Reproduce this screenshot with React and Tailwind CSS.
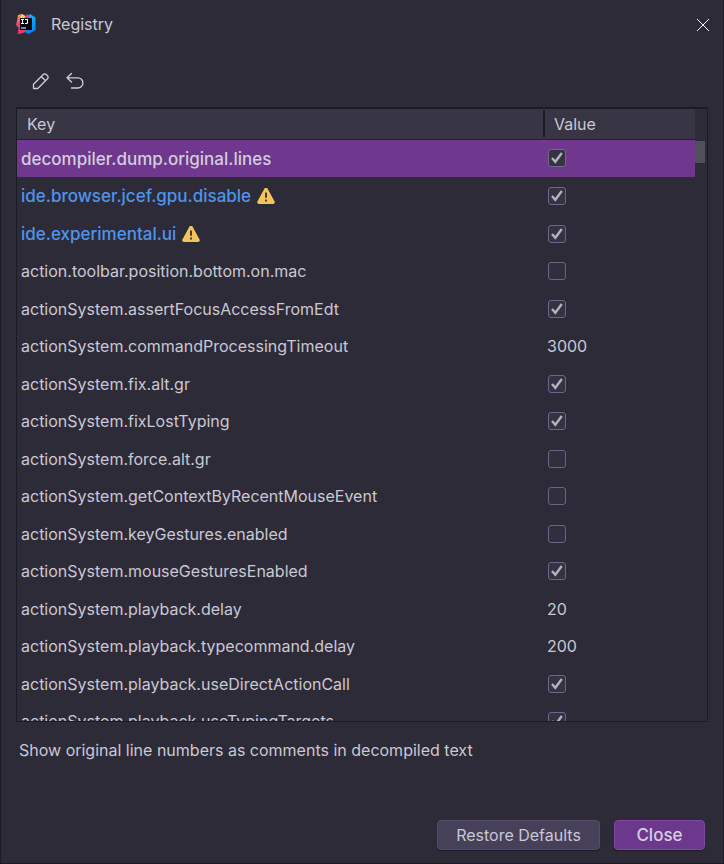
import { useState } from "react";

const initialEntries = [
  { key: "decompiler.dump.original.lines", value: true, selected: true },
  { key: "ide.browser.jcef.gpu.disable", value: true, modified: true },
  { key: "ide.experimental.ui", value: true, modified: true },
  { key: "action.toolbar.position.bottom.on.mac", value: false },
  { key: "actionSystem.assertFocusAccessFromEdt", value: true },
  { key: "actionSystem.commandProcessingTimeout", value: "3000" },
  { key: "actionSystem.fix.alt.gr", value: true },
  { key: "actionSystem.fixLostTyping", value: true },
  { key: "actionSystem.force.alt.gr", value: false },
  { key: "actionSystem.getContextByRecentMouseEvent", value: false },
  { key: "actionSystem.keyGestures.enabled", value: false },
  { key: "actionSystem.mouseGesturesEnabled", value: true },
  { key: "actionSystem.playback.delay", value: "20" },
  { key: "actionSystem.playback.typecommand.delay", value: "200" },
  { key: "actionSystem.playback.useDirectActionCall", value: true },
  { key: "actionSystem.playback.useTypingTargets", value: true },
];

function IdeaLogo() {
  return (
    <svg viewBox="0 0 20 20" className="size-5" aria-hidden="true">
      <defs>
        <linearGradient id="warm" x1="0" y1="0" x2="0.3" y2="1">
          <stop offset="0" stopColor="#fcb24a" />
          <stop offset="0.35" stopColor="#fb6a4c" />
          <stop offset="0.6" stopColor="#e8338c" />
          <stop offset="1" stopColor="#f0246e" />
        </linearGradient>
        <linearGradient id="cool" x1="0" y1="0" x2="0" y2="1">
          <stop offset="0" stopColor="#10b5f5" />
          <stop offset="1" stopColor="#087cfa" />
        </linearGradient>
      </defs>
      <path d="M10 3 14 0l5.500 3.500V16L13 20l-5-2Z" fill="url(#cool)" />
      <path d="M2 1 6 0l5 3v12l-4 3-5.500 2 1-6L0 11l1-4Z" fill="url(#warm)" />
      <path d="M6 0l5 3-1 3-6-2Z" fill="#f6d365" />
      <path d="M8.500 4 11 0l2 2-1 3Z" fill="#e0359f" />
      <path d="M3 16l4-1 3 2-3 2-4.500 1Z" fill="#f4386c" />
      <rect x="4" y="4" width="12" height="12" fill="#07060b" />
      <path
        d="M5 5.500h3M6.500 5.500v4M5 9.500h3M9 5.500h2.500v3q0 1-1 1H9M5 14h5"
        stroke="#fff"
        strokeWidth="1.100"
        fill="none"
      />
    </svg>
  );
}

function PencilIcon() {
  return (
    <svg viewBox="0 0 18 18" className="size-[18px]" fill="none" stroke="currentColor" strokeWidth="1.300" strokeLinejoin="round" aria-hidden="true">
      <path d="M1.500 16.500V12.300L11.300 2.500a2.100 2.100 0 0 1 3 0l1.200 1.200a2.100 2.100 0 0 1 0 3L5.700 16.500ZM9.300 4.500l4.200 4.200" />
    </svg>
  );
}

function UndoIcon() {
  return (
    <svg viewBox="0 0 18 18" className="size-[18px]" fill="none" stroke="currentColor" strokeWidth="1.300" strokeLinecap="round" strokeLinejoin="round" aria-hidden="true">
      <path d="M5.500 1.500 1 5.800l4.500 4.200M1 5.800h10.800a5 5 0 0 1 0 10.200H5.500" />
    </svg>
  );
}

function WarningIcon() {
  return (
    <svg viewBox="0 0 18 18" className="size-[18px] shrink-0" role="img" aria-label="Restart required">
      <path d="M7.500 .4a1.700 1.700 0 0 1 3 0l7.100 13.200A1.700 1.700 0 0 1 16.100 16H1.900A1.700 1.700 0 0 1 .4 13.600Z" fill="#f2c55c" />
      <path d="M8 4.500h2v5.200H8ZM8 11.500h2v2H8Z" fill="#4d3d25" />
    </svg>
  );
}

function Tick({ label, checked, onChange, selected }) {
  return (
    <label className="grid size-[18px] place-items-center">
      <input
        type="checkbox"
        aria-label={label}
        checked={checked}
        onChange={onChange}
        className={`col-start-1 row-start-1 size-[18px] appearance-none rounded-[3px] border ${
          selected ? "border-[#716a85] bg-[#353342]" : checked ? "border-[#6f6390] bg-[#353242]" : "border-[#6b6484] bg-[#312f3d]"
        }`}
      />
      {checked && (
        <svg viewBox="0 0 18 18" className="pointer-events-none col-start-1 row-start-1 size-[18px]" fill="none" stroke="#b4b1c0" strokeWidth="2.400" aria-hidden="true">
          <path d="M4 9 7.300 12.800 13.800 4" />
        </svg>
      )}
    </label>
  );
}

export default function App() {
  const [entries, setEntries] = useState(initialEntries);
  const toggle = (key) =>
    setEntries((list) => list.map((e) => (e.key === key ? { ...e, value: !e.value } : e)));

  return (
    <main className="flex h-screen flex-col border-x border-b border-[#1c1a25] bg-[#2d2b38] font-['Inter',sans-serif] text-base text-[#c9c8d3]">
      <header className="flex h-12 shrink-0 items-center pr-3 pl-[15px]">
        <IdeaLogo />
        <h1 className="ml-[15px] flex-1">Registry</h1>
        <button type="button" aria-label="Close window" className="grid size-4 place-items-center text-[#f4f4f6]">
          <svg viewBox="0 0 16 16" className="size-4" stroke="currentColor" strokeWidth="1" aria-hidden="true">
            <path d="M2 3l12 12M14 3 2 15" />
          </svg>
        </button>
      </header>

      <div className="flex h-[59px] shrink-0 items-center gap-4 pt-[6px] pl-[31px] text-[#cfced8]">
        <button type="button" aria-label="Edit value">
          <PencilIcon />
        </button>
        <button type="button" aria-label="Revert value">
          <UndoIcon />
        </button>
      </div>

      <section className="mx-[15px] flex min-h-0 flex-1 overflow-hidden border border-t-2 border-[#1c1a25]">
        <div className="min-w-0 flex-1">
          <table className="w-full table-fixed border-collapse text-left">
            <thead>
              <tr className="h-[30px] border-b border-[#22202c] bg-[#383545]">
                <th scope="col" className="p-0 pl-[10px] font-normal">Key</th>
                <th scope="col" className="w-[152px] p-0 font-normal">
                  <div className="flex h-[27px] items-center border-l-2 border-[#1c1a25] pl-[9px]">Value</div>
                </th>
              </tr>
            </thead>
            <tbody>
              {entries.map((e) => (
                <tr key={e.key} className={`h-[37px] first:h-[38px] even:h-[38px] ${e.selected ? "bg-[#6f388e]" : ""}`}>
                  <td className="p-0 pl-1">
                    <div
                      className={`flex items-center gap-[6px] ${
                        e.modified
                          ? "pt-[2px] text-[17px] font-medium text-[#4f94ec]"
                          : e.selected
                            ? "pt-[2px] text-[17px] font-medium text-[#d3cddb]"
                            : ""
                      }`}
                    >
                      {e.key}
                      {e.modified && <WarningIcon />}
                    </div>
                  </td>
                  <td className={typeof e.value === "string" ? "p-0 pl-1" : "p-0 pl-[5px]"}>
                    {typeof e.value === "string" ? (
                      e.value
                    ) : (
                      <Tick label={e.key} checked={e.value} selected={e.selected} onChange={() => toggle(e.key)} />
                    )}
                  </td>
                </tr>
              ))}
            </tbody>
          </table>
        </div>
        <div className="w-3 shrink-0 pt-8">
          <div className="mr-[2px] h-[22px] bg-[#504f5a]" />
        </div>
      </section>

      <p className="h-[98px] shrink-0 px-[18px] pt-4">Show original line numbers as comments in decompiled text</p>

      <footer className="flex shrink-0 justify-end gap-[14px] pr-[18px] pb-[13px]">
        <button type="button" className="h-[30px] w-[163px] rounded border border-[#524d6c] bg-[#464059] shadow-[0_1px_1px_#201e29]">
          Restore Defaults
        </button>
        <button type="button" className="h-[30px] w-[91px] rounded border border-[#7f4b9f] bg-[#6c388e] pt-[2px] text-[17px] font-medium text-[#d6cfde] shadow-[0_1px_1px_#201e29]">
          Close
        </button>
      </footer>
    </main>
  );
}
